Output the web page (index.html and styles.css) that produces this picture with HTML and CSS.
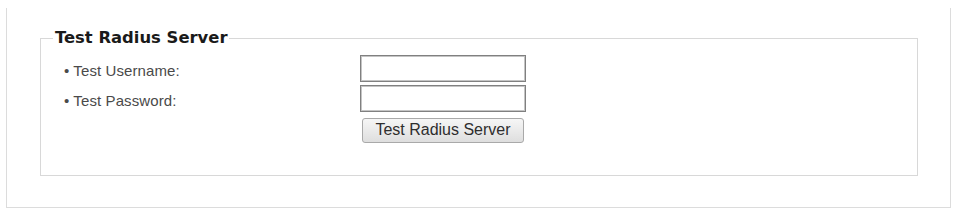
FILE: index.html
```html
<!DOCTYPE html>
<html lang="en">
<head>
	<meta charset="UTF-8">
	<title>Test Radius Server</title>
	<link rel="stylesheet" href="styles.css">
</head>
<body>

	<div class="panel">
		<form action="" method="post">
			<fieldset>
				<legend>Test Radius Server</legend>
				<div class="rows">
					<label for="test-username">&bull; Test Username:</label>
					<input type="text" id="test-username" name="test-username">

					<label for="test-password">&bull; Test Password:</label>
					<input type="password" id="test-password" name="test-password">

					<span></span>
					<button type="button">Test Radius Server</button>
				</div>
			</fieldset>
		</form>
	</div>

</body>
</html>
```

FILE: styles.css
```css
* {
	box-sizing: border-box;
}
html,
body {
	margin: 0;
	background-color: #fff;
}
body {
	width: 957px;
	height: 212px;
	overflow: hidden;
	font-family: "Liberation Sans", Arial, sans-serif;
}
.panel {
	margin: 8px 0 0 6px;
	padding: 22px 0 31px 33px;
	width: 945px;
	border: 1px solid #dcdcdc;
	border-top: none;
}
form {
	margin: 0;
}
fieldset {
	margin: 0;
	padding: 9px 12px 35px 23px;
	width: 878px;
	border: 1px solid #d8d8d8;
}
legend {
	margin: 0 0 0 -11px;
	padding: 0 2px;
	line-height: 16px;
	font-family: "DejaVu Sans", Verdana, sans-serif;
	font-weight: bold;
	font-size: 16.4px;
	color: #1a1a1a;
}
.rows {
	display: grid;
	grid-template-columns: 296px 166px;
	grid-template-rows: 27px 27px 25px;
	row-gap: 3px;
	align-items: center;
}
label {
	padding-top: 4px;
	font-size: 15px;
	letter-spacing: .1px;
	color: #4a4a4a;
}
input {
	margin: 0;
	width: 166px;
	height: 27px;
	border: 1px solid #808080;
	box-shadow: inset 0 0 0 1px #c4c4c4;
	background-color: #fff;
	outline: none;
}
button {
	margin: 5px 0 0 2px;
	padding: 0;
	width: 162px;
	height: 25px;
	border: 1px solid #a9a9a9;
	border-radius: 3px;
	background: linear-gradient(#f6f6f6, #dedede);
	font-family: "Liberation Sans", Arial, sans-serif;
	font-size: 16px;
	color: #2e2e2e;
	cursor: pointer;
}
```
